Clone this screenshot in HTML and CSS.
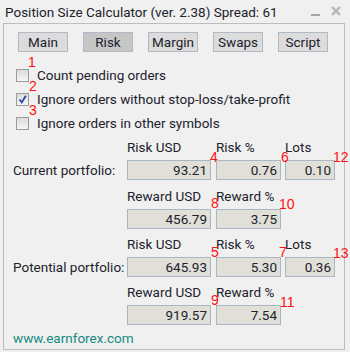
FILE: index.html
```html
<!DOCTYPE html>
<html>
<head>
<meta charset="utf-8">
<link rel="stylesheet" href="styles.css">
</head>
<body>
<div class="win">
  <div class="titlebar">
    <span class="title">Position Size Calculator (ver. 2.38) Spread: 61</span>
    <span class="ctrls">
      <span class="min"></span>
      <svg class="close" width="10" height="10" viewBox="0 0 10 10"><path d="M1 1 L9 9 M9 1 L1 9" stroke="#b5b5b5" stroke-width="2.4" fill="none"/></svg>
    </span>
  </div>
  <div class="panel">
    <div class="tabs">
      <div class="tab">Main</div>
      <div class="tab active">Risk</div>
      <div class="tab">Margin</div>
      <div class="tab">Swaps</div>
      <div class="tab">Script</div>
    </div>
    <div class="checks">
      <div class="row"><span class="box"></span><span>Count pending orders</span></div>
      <div class="row"><span class="box"><svg width="11" height="11" viewBox="0 0 11 11"><path d="M2.5 5.5 L4.8 8.5 L8.8 1.8" stroke="#2c4aa8" stroke-width="1.8" fill="none"/></svg></span><span>Ignore orders without stop-loss/take-profit</span></div>
      <div class="row"><span class="box"></span><span>Ignore orders in other symbols</span></div>
    </div>
    <div class="grid">
      <div class="lbl c2">Risk USD</div>
      <div class="lbl c3">Risk %</div>
      <div class="lbl c4">Lots</div>
      <div class="rowlbl c1">Current portfolio:</div>
      <div class="field w1 c2">93.21</div>
      <div class="field w2 c3">0.76</div>
      <div class="field w3 c4">0.10</div>
      <div class="lbl c2">Reward USD</div>
      <div class="lbl c3">Reward %</div>
      <div class="field w1 c2">456.79</div>
      <div class="field w2 c3">3.75</div>

      <div class="lbl c2">Risk USD</div>
      <div class="lbl c3">Risk %</div>
      <div class="lbl c4">Lots</div>
      <div class="rowlbl c1">Potential portfolio:</div>
      <div class="field w1 c2">645.93</div>
      <div class="field w2 c3">5.30</div>
      <div class="field w3 c4">0.36</div>
      <div class="lbl c2">Reward USD</div>
      <div class="lbl c3">Reward %</div>
      <div class="field w1 c2">919.57</div>
      <div class="field w2 c3">7.54</div>
    </div>
    <div class="footer">www.earnforex.com</div>
  </div>
  <div class="ann a1">1</div>
  <div class="ann a2">2</div>
  <div class="ann a3">3</div>
  <div class="ann a4">4</div>
  <div class="ann a6">6</div>
  <div class="ann a12">12</div>
  <div class="ann a8">8</div>
  <div class="ann a10">10</div>
  <div class="ann a5">5</div>
  <div class="ann a7">7</div>
  <div class="ann a13">13</div>
  <div class="ann a9">9</div>
  <div class="ann a11">11</div>
</div>
</body>
</html>
```
FILE: styles.css
```css
html, body {
  margin: 0;
  padding: 0;
  background: #f0f0f0;
}
.win {
  position: relative;
  width: 350px;
  height: 352px;
  background: #f0f0f0;
  font-family: Roboto, "Liberation Sans", sans-serif;
  font-size: 13.5px;
  color: #22222c;
  overflow: hidden;
}
.titlebar {
  height: 23px;
  display: flex;
  align-items: center;
  justify-content: space-between;
  padding-left: 5px;
  box-sizing: border-box;
}
.title {
  line-height: 16px;
  margin-top: 1px;
}
.ctrls {
  display: flex;
  align-items: center;
  margin-right: 9px;
}
.min {
  display: block;
  width: 9px;
  height: 2px;
  background: #a5a5a5;
  margin-top: 7px;
  margin-right: 11px;
}
.close {
  display: block;
  margin-top: -1px;
}
.panel {
  margin-left: 3px;
  width: 342px;
  height: 327px;
  box-sizing: border-box;
  border: 1px solid #bdbdbd;
  padding: 8px 0 0 9px;
}
.tabs {
  display: flex;
  gap: 15px;
  padding-left: 5px;
}
.tab {
  width: 50px;
  height: 20px;
  box-sizing: border-box;
  border: 1px solid #b0bac4;
  background: #dcdcdc;
  display: flex;
  align-items: center;
  justify-content: center;
  line-height: 16px;
}
.tab.active {
  background: #c6c6c6;
}
.checks {
  margin-top: 11px;
  padding-left: 3px;
}
.row {
  height: 24px;
  display: flex;
  align-items: center;
}
.box {
  width: 13px;
  height: 13px;
  box-sizing: border-box;
  border: 1px solid #9a9a9a;
  background: linear-gradient(#dcdcdc, #f6f6f6);
  margin-right: 8px;
  display: flex;
  align-items: center;
  justify-content: center;
}
.box svg {
  display: block;
}
.grid {
  display: grid;
  grid-template-columns: 114px 89px 69px 50px;
  grid-template-rows: 25px 20px 29px 20px 28px 20px 28px 20px;
}
.c1 { grid-column: 1; }
.c2 { grid-column: 2; }
.c3 { grid-column: 3; }
.c4 { grid-column: 4; }
.lbl {
  align-self: end;
  line-height: 15px;
  padding-bottom: 5px;
  white-space: nowrap;
}
.rowlbl {
  align-self: center;
  line-height: 16px;
  white-space: nowrap;
}
.field {
  height: 20px;
  box-sizing: border-box;
  border: 1px solid #a9b7c5;
  background: #e0dfd8;
  text-align: right;
  padding-right: 3px;
  line-height: 18px;
}
.w1 { width: 84px; }
.w2 { width: 65px; }
.w3 { width: 50px; }
.footer {
  margin-top: 5px;
  line-height: 16px;
  color: #148a80;
}
.ann {
  position: absolute;
  font-family: "Liberation Sans", sans-serif;
  font-size: 14px;
  line-height: 14px;
  color: #ff1010;
}
.a1 { left: 28px; top: 55px; }
.a2 { left: 29px; top: 79px; }
.a3 { left: 29px; top: 103px; }
.a4 { left: 210px; top: 150px; }
.a6 { left: 281px; top: 150px; }
.a12 { left: 333px; top: 150px; }
.a8 { left: 211px; top: 196px; }
.a10 { left: 279px; top: 197px; }
.a5 { left: 211px; top: 245px; }
.a7 { left: 279px; top: 245px; }
.a13 { left: 333px; top: 246px; }
.a9 { left: 211px; top: 293px; }
.a11 { left: 280px; top: 295px; }
```
